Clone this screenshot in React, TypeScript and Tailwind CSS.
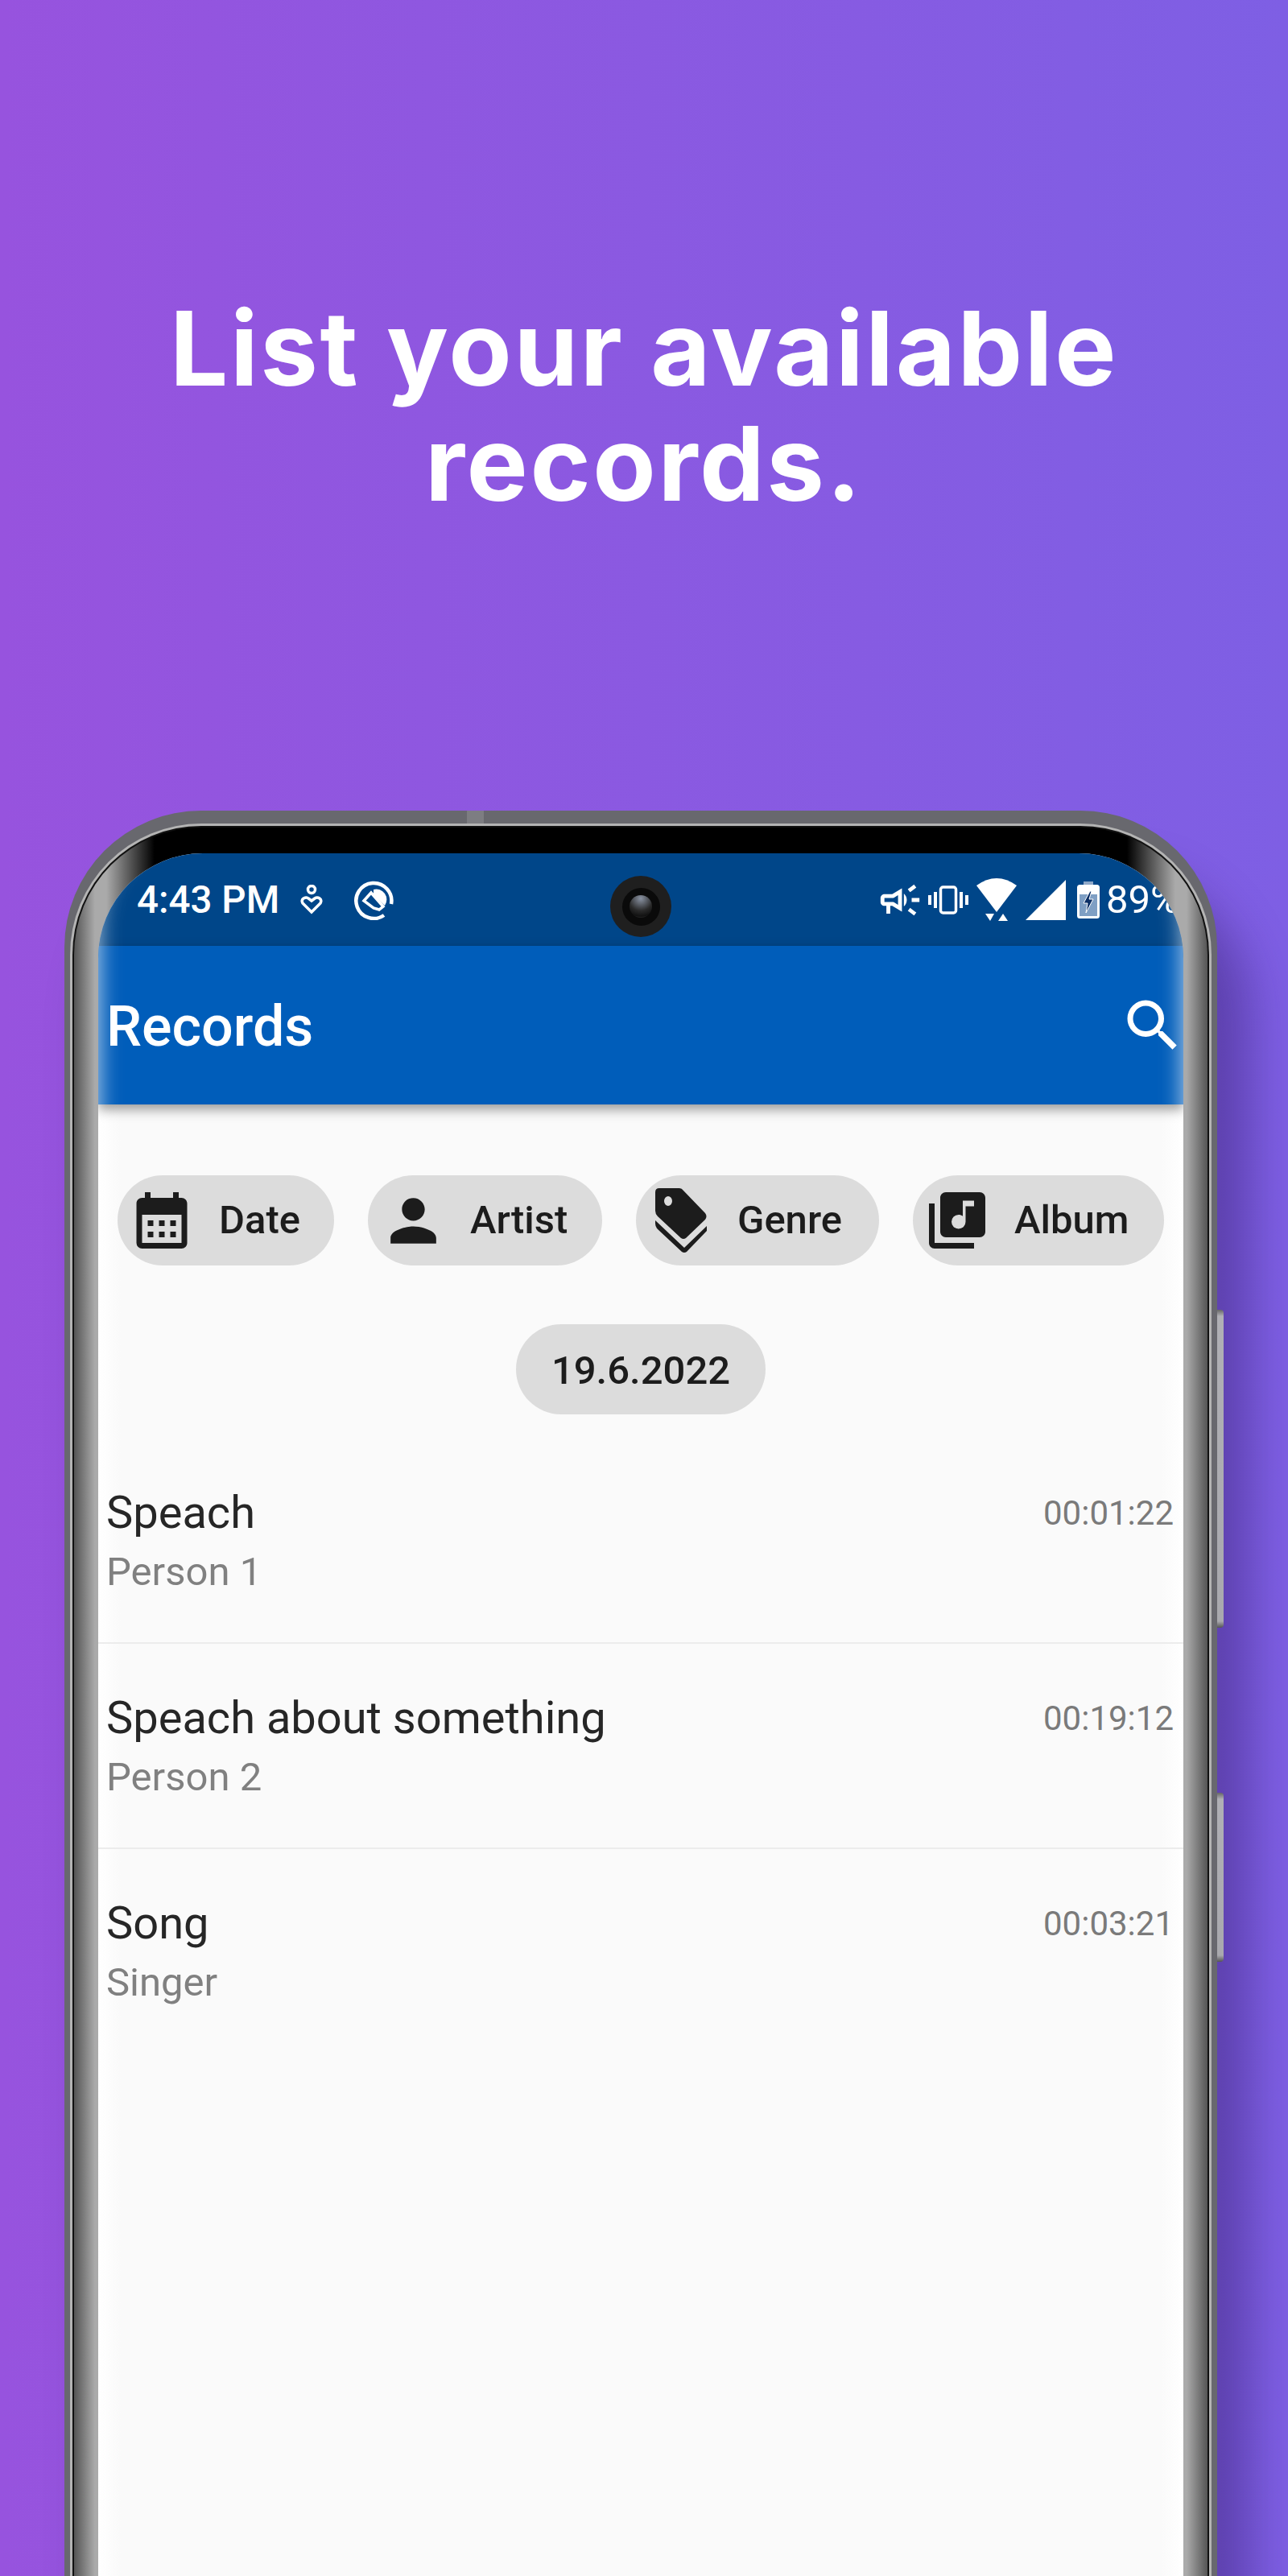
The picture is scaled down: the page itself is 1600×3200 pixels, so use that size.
import type { ReactNode } from "react";
import {
  MdCalendarMonth,
  MdLibraryMusic,
  MdOutlineCampaign,
  MdPerson,
  MdSearch,
} from "react-icons/md";

const records = [
  { title: "Speach", artist: "Person 1", time: "00:01:22" },
  { title: "Speach about something", artist: "Person 2", time: "00:19:12" },
  { title: "Song", artist: "Singer", time: "00:03:21" },
];

const TagsIcon = () => (
  <svg width="64" height="82" viewBox="0 0 64 82" fill="#1c1c1c" className="ml-[24px] mr-[38px] shrink-0">
    <path
      fillRule="evenodd"
      d="M5 1h25q3 0 5 3l27 28q3 4 0 8L38 63q-3 2-6 0L3 36q-3-3-3-7V6q0-5 5-5Zm11 10a5 6 0 1 0 0 12a5 6 0 1 0 0-12Z"
    />
    <path d="M0 41l36 34 28-27v6L39 80q-3 2-6 0L3 52q-3-3-3-7Z" />
  </svg>
);

const Chip = ({ icon, label, className }: { icon: ReactNode; label: string; className: string }) => (
  <div className={`flex h-[112px] items-center rounded-full bg-[#dcdcdc] text-[49px] font-medium text-[#1c1c1c] ${className}`}>
    {icon}
    <span>{label}</span>
  </div>
);

const HeartPin = () => (
  <svg width="28" height="38" viewBox="0 0 28 38" fill="none" stroke="white" strokeWidth="3.5" className="absolute left-[251px] top-[39px]">
    <circle cx="14" cy="6" r="4.5" />
    <path d="M14 34 3 23q-2-4 1-6 4-2 6 0l4 3 4-3q3-2 6 0 3 2 1 6Z" />
  </svg>
);

const QIcon = () => (
  <svg width="50" height="50" viewBox="0 0 50 50" fill="none" className="absolute left-[318px] top-[33px]">
    <path d="M37 44A22 22 0 1 1 46 30" stroke="white" strokeWidth="4.5" />
    <path d="M24 12a13 13 0 0 1 14 20L24 19Z" fill="white" />
    <path d="M12 26 21 16 36 33 31 37 24 35Z" fill="none" stroke="white" strokeWidth="3.5" />
  </svg>
);

const StatusRight = () => (
  <div className="flex items-center">
    <MdOutlineCampaign className="h-[58px] w-[58px] text-white" />
    <svg width="50" height="36" viewBox="0 0 50 36" fill="none" className="ml-[6px]">
      <rect x="15.5" y="2" width="19" height="32" rx="3" stroke="white" strokeWidth="3.5" />
      <path d="M9 8v20M41 8v20" stroke="white" strokeWidth="4" />
      <path d="M2 12v12M48 12v12" stroke="white" strokeWidth="4" />
    </svg>
    <svg width="50" height="54" viewBox="0 0 50 54" fill="white" className="ml-[10px]">
      <path d="M0 9Q25-9 50 9L25 42Z" />
      <path d="M11 44h11l-5 9ZM33 44l6 9H27Z" />
    </svg>
    <svg width="50" height="50" viewBox="0 0 50 50" fill="white" className="ml-[11px]">
      <path d="M50 0V50H0Z" />
    </svg>
    <svg width="28" height="46" viewBox="0 0 28 46" fill="none" className="ml-[14px]">
      <rect x="8" y="0" width="12" height="5" fill="#8fa8c8" />
      <rect x="1.5" y="5.5" width="25" height="39" rx="2" stroke="white" strokeWidth="3" fill="#7f9fc4" />
      <rect x="3" y="7" width="22" height="9" fill="white" />
      <path d="M16 12 8 27h5l-2 12 9-17h-5l3-10Z" fill="#0b2f66" stroke="white" strokeWidth="1" />
    </svg>
    <span className="ml-[8px] text-[49px] leading-none text-white">89%</span>
  </div>
);

const PhoneScreen = () => (
  <div className="relative h-[2200px] overflow-hidden rounded-t-[130px] bg-[#fafafa] font-[Roboto,sans-serif]">
    {/* STATUS BAR */}
    <div className="relative flex h-[115px] items-center justify-between bg-[#004689] pl-[48px] pr-[5px]">
      <span className="pt-[3px] text-[47.5px] font-medium leading-none text-white">4:43 PM</span>
      <HeartPin />
      <QIcon />
      <StatusRight />
    </div>

    {/* CAMERA */}
    <div className="absolute left-[636px] top-[28px] flex h-[76px] w-[76px] items-center justify-center rounded-full bg-[#1f1f1f]">
      <div className="flex h-[47px] w-[47px] items-center justify-center rounded-full bg-[#0a0a0a]">
        <div className="h-[28px] w-[28px] rounded-full bg-[radial-gradient(circle_at_50%_15%,#8a93a3,#2a2a2a_55%,#111_80%,#555)]" />
      </div>
    </div>

    {/* APP BAR */}
    <div className="relative z-10 flex h-[197px] items-center justify-between bg-[#005dba] pl-[10px] pr-0 shadow-[0_6px_14px_rgba(0,0,0,0.4)]">
      <span className="pt-[3px] text-[70px] font-medium leading-none text-white">Records</span>
      <MdSearch className="mr-[-4px] h-[84px] w-[84px] text-white" />
    </div>

    {/* EDGE GLOW OVER THE HEADER */}
    <div className="absolute left-0 right-0 top-0 z-20 h-[312px] overflow-hidden">
      <div className="h-[600px] rounded-t-[130px] shadow-[inset_0_-40px_28px_rgba(255,255,255,0.8)]" />
    </div>

    <div className="h-[2000px] bg-[linear-gradient(90deg,#fff,#fafafa_28px,#fafafa_calc(100%-28px),#fff)]">
      {/* FILTERS */}
      <div className="flex gap-[42px] pl-[24px] pt-[88px]">
        <Chip
          className="w-[269px]"
          label="Date"
          icon={<MdCalendarMonth className="ml-[13px] mr-[29px] h-[84px] w-[84px] shrink-0" />}
        />
        <Chip
          className="w-[291px]"
          label="Artist"
          icon={<MdPerson className="ml-[14px] mr-[28px] h-[85px] w-[85px] shrink-0" />}
        />
        <Chip className="w-[302px]" label="Genre" icon={<TagsIcon />} />
        <Chip
          className="w-[312px]"
          label="Album"
          icon={<MdLibraryMusic className="ml-[13px] mr-[29px] h-[84px] w-[84px] shrink-0" />}
        />
      </div>

      {/* DATE */}
      <div className="mt-[73px] flex justify-center">
        <div className="flex h-[112px] w-[310px] items-center justify-center rounded-full bg-[#dcdcdc] pt-[3px] text-[49px] font-medium text-[#1c1c1c]">
          19.6.2022
        </div>
      </div>

      {/* RECORDS */}
      <div className="mt-[30px]">
        {records.map((record, i) => (
          <div
            key={record.title}
            className={`flex h-[255px] justify-between pl-[10px] pr-[12px] pt-[59px] ${i < 2 ? "border-b-2 border-[#ececec]" : ""}`}
          >
            <div>
              <div className="text-[56px] leading-[66px] text-[#262626]">{record.title}</div>
              <div className="mt-[15px] text-[49px] leading-[52px] text-[#808080]">{record.artist}</div>
            </div>
            <div className="pt-[1px] text-[42px] leading-[66px] text-[#7a7a7a]">{record.time}</div>
          </div>
        ))}
      </div>
    </div>
  </div>
);

export default function App() {
  return (
    <div className="h-[3200px] w-[1600px] overflow-hidden bg-[linear-gradient(90deg,#9753de,#7e5fe4)]">
      <h1 className="pt-[361px] text-center font-[Inter,sans-serif] text-[128px] font-bold leading-[143px] tracking-[2.6px] text-white">
        List your available
        <br />
        records.
      </h1>

      {/* PHONE */}
      <div className="relative ml-[80px] mt-[360px] w-[1432px] rounded-t-[170px] bg-[#68686e] px-[7px] pt-[16px] shadow-[40px_80px_60px_rgba(40,20,90,0.4)]">
        <div className="absolute left-[500px] top-0 h-[16px] w-[21px] bg-[#7d7d82]" />
        <div className="absolute right-[-8px] top-[620px] h-[395px] w-[8px] rounded-r-[4px] bg-[linear-gradient(180deg,#666,#b0b0b5_8px,#a9a9ae_calc(100%-8px),#555)]" />
        <div className="absolute right-[-8px] top-[1220px] h-[210px] w-[8px] rounded-r-[4px] bg-[linear-gradient(180deg,#666,#b0b0b5_8px,#a9a9ae_calc(100%-8px),#555)]" />
        <div className="rounded-t-[163px] bg-[#b4b4b4] px-[3px] pt-[3px]">
          <div className="rounded-t-[160px] bg-[#111] px-[2px] pt-[2px]">
            <div className="rounded-t-[158px] bg-[linear-gradient(90deg,#555,#aaa_26px,#aaa_40px,#000_100px,#000_calc(100%-100px),#aaa_calc(100%-40px),#aaa_calc(100%-26px),#555)] px-[30px] pt-[32px]">
              <PhoneScreen />
            </div>
          </div>
        </div>
      </div>
    </div>
  );
}
